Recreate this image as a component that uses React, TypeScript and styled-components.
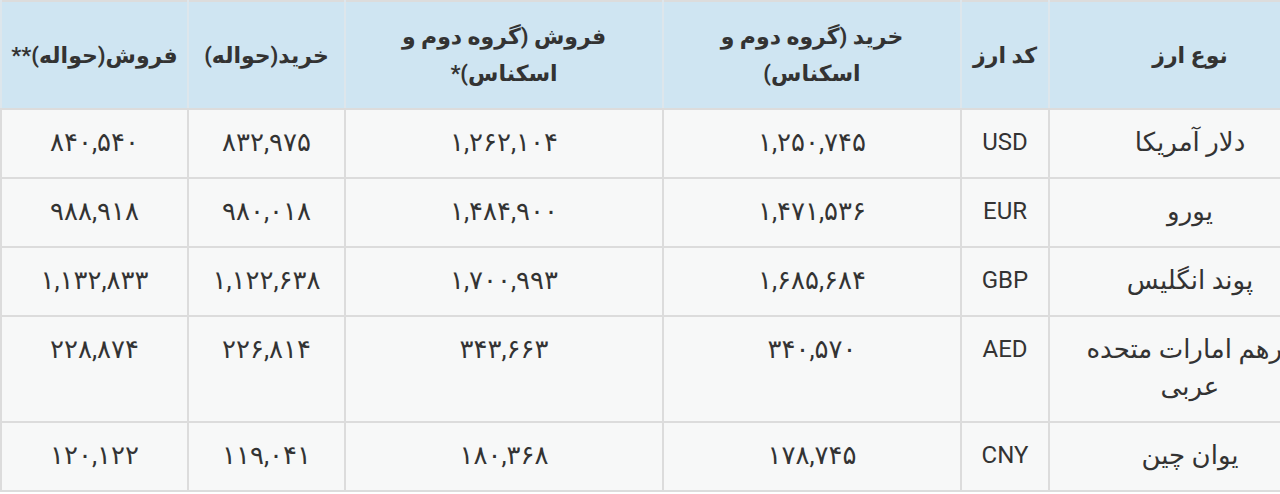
import React from "react";
import styled, { createGlobalStyle } from "styled-components";

const GlobalStyle = createGlobalStyle`
  html, body {
    margin: 0;
    padding: 0;
    background: #ffffff;
  }
  body {
    overflow: hidden;
    width: 1280px;
    height: 494px;
  }
`;

const Viewport = styled.div`
  width: 1280px;
  height: 494px;
  overflow: hidden;
  direction: ltr;
`;

const Table = styled.table`
  direction: rtl;
  width: 1330px;
  table-layout: fixed;
  border-collapse: collapse;
  border: 2px solid #dcdcdc;
  font-family: "Roboto", "DejaVu Sans", sans-serif;
  font-size: 26px;
  line-height: 37px;
  color: #333333;
`;

const HeadRow = styled.tr`
  background: #cfe5f2;
`;

const HeadCell = styled.th`
  font-size: 22px;
  font-weight: 700;
  text-align: center;
  vertical-align: middle;
  padding: 16px 8px;
  border: 2px solid #dde6ec;
  border-bottom-color: #dcdcdc;
  border-top-color: #dcdcdc;
`;

const BodyRow = styled.tr`
  background: #f7f8f8;
`;

const Cell = styled.td<{ $latin?: boolean }>`
  text-align: center;
  vertical-align: top;
  padding: 14px 8px 16px;
  border: 2px solid #dcdcdc;
  font-size: ${(p) => (p.$latin ? "24px" : "26px")};
`;

type Row = {
  name: string;
  code: string;
  buyCash: string;
  sellCash: string;
  buyWire: string;
  sellWire: string;
};

const rows: Row[] = [
  { name: "دلار آمریکا", code: "USD", buyCash: "۱,۲۵۰,۷۴۵", sellCash: "۱,۲۶۲,۱۰۴", buyWire: "۸۳۲,۹۷۵", sellWire: "۸۴۰,۵۴۰" },
  { name: "یورو", code: "EUR", buyCash: "۱,۴۷۱,۵۳۶", sellCash: "۱,۴۸۴,۹۰۰", buyWire: "۹۸۰,۰۱۸", sellWire: "۹۸۸,۹۱۸" },
  { name: "پوند انگلیس", code: "GBP", buyCash: "۱,۶۸۵,۶۸۴", sellCash: "۱,۷۰۰,۹۹۳", buyWire: "۱,۱۲۲,۶۳۸", sellWire: "۱,۱۳۲,۸۳۳" },
  { name: "درهم امارات متحده عربی", code: "AED", buyCash: "۳۴۰,۵۷۰", sellCash: "۳۴۳,۶۶۳", buyWire: "۲۲۶,۸۱۴", sellWire: "۲۲۸,۸۷۴" },
  { name: "یوان چین", code: "CNY", buyCash: "۱۷۸,۷۴۵", sellCash: "۱۸۰,۳۶۸", buyWire: "۱۱۹,۰۴۱", sellWire: "۱۲۰,۱۲۲" },
];

const widths = [282, 88, 298, 318, 157, 187];

export default function App() {
  return (
    <>
      <GlobalStyle />
      <Viewport>
        <Table>
          <colgroup>
            {widths.map((w, i) => (
              <col key={i} style={{ width: w }} />
            ))}
          </colgroup>
          <thead>
            <HeadRow>
              <HeadCell>نوع ارز</HeadCell>
              <HeadCell>کد ارز</HeadCell>
              <HeadCell>
                خرید (گروه دوم و
                <br />
                اسکناس)
              </HeadCell>
              <HeadCell>
                فروش (گروه دوم و
                <br />
                اسکناس)*
              </HeadCell>
              <HeadCell>خرید(حواله)</HeadCell>
              <HeadCell>فروش(حواله)**</HeadCell>
            </HeadRow>
          </thead>
          <tbody>
            {rows.map((r) => (
              <BodyRow key={r.code}>
                <Cell>
                  {r.code === "AED" ? (
                    <>
                      درهم امارات متحده
                      <br />
                      عربی
                    </>
                  ) : (
                    r.name
                  )}
                </Cell>
                <Cell $latin>{r.code}</Cell>
                <Cell>{r.buyCash}</Cell>
                <Cell>{r.sellCash}</Cell>
                <Cell>{r.buyWire}</Cell>
                <Cell>{r.sellWire}</Cell>
              </BodyRow>
            ))}
          </tbody>
        </Table>
      </Viewport>
    </>
  );
}
